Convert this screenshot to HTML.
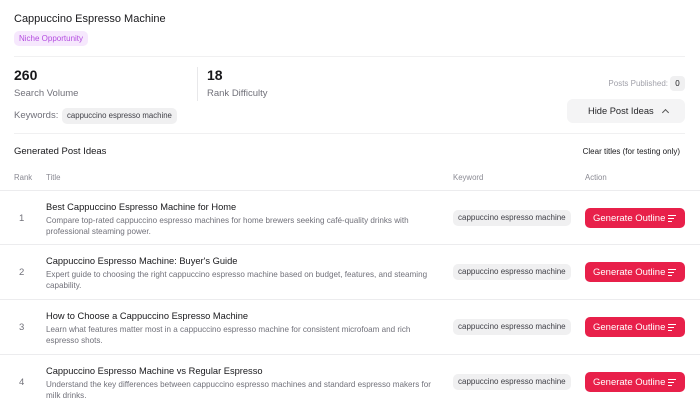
<!DOCTYPE html><html><head><style>
*{margin:0;padding:0;box-sizing:border-box}
body{width:700px;height:401px;overflow:hidden;background:#fff;font-family:"Liberation Sans",sans-serif;color:#18181b;position:relative}
.a{position:absolute;white-space:nowrap}
.chip{background:#f0f0f1;border-radius:5px;font-size:8px;color:#3f3f46;height:16px;line-height:16px;padding:0 5px}
.btn{background:#e8204a;color:#fff;border-radius:5px;font-size:9.5px;height:20px;width:100px;display:flex;align-items:center;padding-left:8px}
.row{position:absolute;left:0;width:700px;height:55px;border-top:1px solid #ececee}
.n{position:absolute;left:19px;top:22px;font-size:9.5px;color:#71717a}
.t{position:absolute;left:46px;top:11px;font-size:9.3px;color:#18181b}
.d{position:absolute;left:46px;top:24px;font-size:8.1px;color:#71717a;line-height:11px;width:385px}
.row .chip{position:absolute;left:453px;top:19px}
.row .btn{position:absolute;left:585px;top:17px}
.ic{position:absolute;right:9px;top:7px;width:8px}
.ic i{display:block;height:1px;background:#fff;margin-bottom:2px}
</style></head><body>
<div class="a" style="left:14px;top:13px;font-size:11px">Cappuccino Espresso Machine</div>
<div class="a" style="left:14px;top:31px;height:15px;line-height:15px;padding:0 5px;background:#f6e8fd;color:#b44ce0;border-radius:5px;font-size:8px">Niche Opportunity</div>
<div class="a" style="left:14px;top:56px;width:671px;height:1px;background:#f0f0f1"></div>
<div class="a" style="left:14px;top:67px;font-size:14px;font-weight:bold">260</div>
<div class="a" style="left:14px;top:88px;font-size:9.5px;color:#71717a">Search Volume</div>
<div class="a" style="left:197px;top:67px;width:1px;height:34px;background:#e8e8ea"></div>
<div class="a" style="left:207px;top:67px;font-size:14px;font-weight:bold">18</div>
<div class="a" style="left:207px;top:88px;font-size:9.5px;color:#71717a">Rank Difficulty</div>
<div class="a" style="left:14px;top:110px;font-size:9.5px;color:#71717a">Keywords:</div>
<div class="a chip" style="left:62px;top:108px;font-size:7.8px">cappuccino espresso machine</div>
<div class="a" style="right:32px;top:79px;font-size:8px;color:#a1a1aa">Posts Published:</div>
<div class="a" style="left:670px;top:76px;width:15px;height:15px;line-height:15px;text-align:center;background:#f0f0f1;border-radius:4px;font-size:8px">0</div>
<div class="a" style="left:567px;top:99px;width:118px;height:24px;line-height:24px;background:#f4f4f5;border-radius:6px;font-size:9.3px;padding-left:21px;color:#27272a">Hide Post Ideas <span style="display:inline-block;width:5px;height:5px;border-left:1px solid #555;border-top:1px solid #555;transform:rotate(45deg);margin-left:7px;vertical-align:-1px"></span></div>
<div class="a" style="left:14px;top:133px;width:671px;height:1px;background:#f0f0f1"></div>
<div class="a" style="left:14px;top:146px;font-size:9.5px">Generated Post Ideas</div>
<div class="a" style="right:20px;top:147px;font-size:8px">Clear titles (for testing only)</div>
<div class="a" style="left:14px;top:173px;font-size:7.8px;color:#8a8a93">Rank</div>
<div class="a" style="left:46px;top:173px;font-size:7.8px;color:#8a8a93">Title</div>
<div class="a" style="left:453px;top:173px;font-size:7.8px;color:#8a8a93">Keyword</div>
<div class="a" style="left:585px;top:173px;font-size:7.8px;color:#8a8a93">Action</div>

<div class="row" style="top:190px"><div class="n">1</div><div class="t">Best Cappuccino Espresso Machine for Home</div><div class="d">Compare top-rated cappuccino espresso machines for home brewers seeking café-quality drinks with professional steaming power.</div><div class="chip">cappuccino espresso machine</div><div class="btn">Generate Outline<div class="ic"><i></i><i style="width:6px"></i><i style="width:4px"></i></div></div></div>
<div class="row" style="top:244px"><div class="n">2</div><div class="t">Cappuccino Espresso Machine: Buyer's Guide</div><div class="d">Expert guide to choosing the right cappuccino espresso machine based on budget, features, and steaming capability.</div><div class="chip">cappuccino espresso machine</div><div class="btn">Generate Outline<div class="ic"><i></i><i style="width:6px"></i><i style="width:4px"></i></div></div></div>
<div class="row" style="top:299px"><div class="n">3</div><div class="t">How to Choose a Cappuccino Espresso Machine</div><div class="d">Learn what features matter most in a cappuccino espresso machine for consistent microfoam and rich espresso shots.</div><div class="chip">cappuccino espresso machine</div><div class="btn">Generate Outline<div class="ic"><i></i><i style="width:6px"></i><i style="width:4px"></i></div></div></div>
<div class="row" style="top:354px"><div class="n">4</div><div class="t">Cappuccino Espresso Machine vs Regular Espresso</div><div class="d">Understand the key differences between cappuccino espresso machines and standard espresso makers for milk drinks.</div><div class="chip">cappuccino espresso machine</div><div class="btn">Generate Outline<div class="ic"><i></i><i style="width:6px"></i><i style="width:4px"></i></div></div></div>
</body></html>
